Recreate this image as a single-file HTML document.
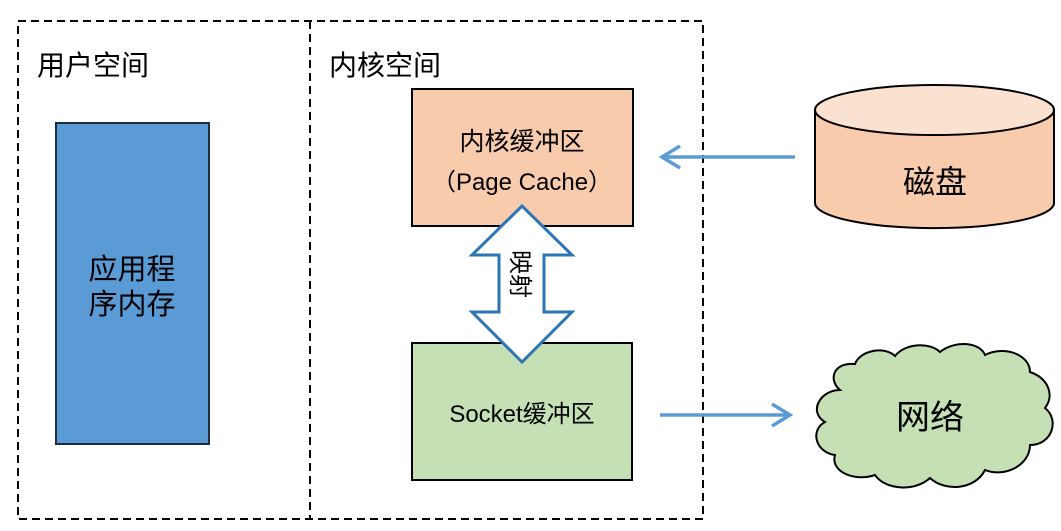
<!DOCTYPE html>
<html><head><meta charset="utf-8"><style>
html,body{margin:0;padding:0;background:#fff;}
svg text{font-family:"Liberation Sans","Noto Sans CJK SC",sans-serif;fill:#000;}
</style></head><body>
<svg width="1061" height="526" viewBox="0 0 1061 526" xmlns="http://www.w3.org/2000/svg">
<rect x="18" y="21" width="685" height="498" fill="none" stroke="#000" stroke-width="2" stroke-dasharray="8,5"/>
<line x1="310" y1="21" x2="310" y2="519" stroke="#000" stroke-width="2" stroke-dasharray="8,5"/>
<text x="37" y="75" font-size="28">用户空间</text>
<text x="329" y="75" font-size="28">内核空间</text>
<rect x="56" y="123" width="153" height="321" fill="#5b9bd5" stroke="#1f2f3f" stroke-width="2"/>
<text x="132" y="279" font-size="29" text-anchor="middle">应用程</text>
<text x="132" y="314" font-size="29" text-anchor="middle">序内存</text>
<rect x="412" y="89" width="221" height="137" fill="#f8cbad" stroke="#000" stroke-width="2"/>
<text x="522" y="150" font-size="25" text-anchor="middle">内核缓冲区</text>
<text x="522" y="190" font-size="24" text-anchor="middle">（Page Cache）</text>
<rect x="412" y="343" width="220" height="137" fill="#c5e0b4" stroke="#000" stroke-width="2"/>
<text x="522" y="422" font-size="24" text-anchor="middle">Socket缓冲区</text>
<polygon points="522,206 572,255 544,255 544,312 572,312 522,362 472,312 499,312 499,255 472,255" fill="#fff" stroke="#2e75b6" stroke-width="3" stroke-linejoin="miter"/>
<text font-size="24" transform="translate(512,250) rotate(90)">映射</text>
<path d="M815 110 L815 203 A119 25 0 0 0 1054 203 L1054 110 Z" fill="#f8cbad" stroke="#000" stroke-width="2"/>
<ellipse cx="934.5" cy="110" rx="119.5" ry="25" fill="#fbe1cf" stroke="#000" stroke-width="2"/>
<text x="935" y="193" font-size="32" text-anchor="middle">磁盘</text>
<line x1="795" y1="157" x2="666" y2="157" stroke="#5b9bd5" stroke-width="3.5"/>
<polyline points="680,146 662,157 680,168" fill="none" stroke="#5b9bd5" stroke-width="3.5"/>
<line x1="660" y1="415" x2="787" y2="415" stroke="#5b9bd5" stroke-width="3.5"/>
<polyline points="772,404 790,415 772,426" fill="none" stroke="#5b9bd5" stroke-width="3.5"/>
<path d="M840 390 C828 380 833 362 855 364 C860 350 885 346 895 356 C905 343 930 342 940 352 C955 340 980 342 985 355 C1005 345 1030 355 1030 372 C1048 378 1055 395 1045 408 C1060 420 1052 445 1030 445 C1030 465 1005 478 985 470 C975 490 945 492 930 478 C915 492 885 490 875 475 C855 482 830 472 835 455 C815 452 810 430 825 422 C808 412 820 390 840 390 Z" fill="#c5e0b4" stroke="#000" stroke-width="2"/>
<text x="930" y="429" font-size="34" text-anchor="middle">网络</text>
</svg>
</body></html>
